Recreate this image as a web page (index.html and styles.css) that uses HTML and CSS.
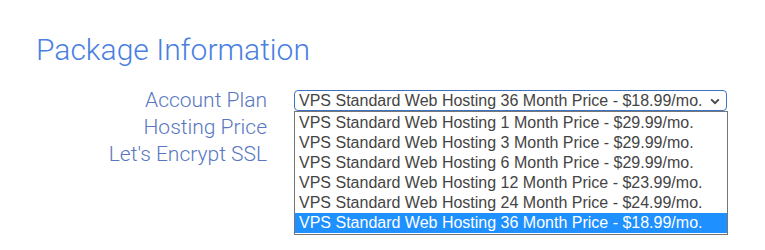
FILE: index.html
```html
<!DOCTYPE html>
<html lang="en">
<head>
  <meta charset="UTF-8">
  <meta name="viewport" content="width=device-width, initial-scale=1.0">
  <title>Package Information</title>
  <link rel="stylesheet" href="styles.css">
</head>
<body>
<div class="section">
  <h2 class="section-title">Package Information</h2>
  <div class="form">
    <div class="form-row">
      <div class="input-label">Account Plan</div>
      <div class="select-wrap">
        <div class="select">
          <span>VPS Standard Web Hosting 36 Month Price - $18.99/mo.</span>
          <svg class="chevron" width="10" height="7" viewBox="0 0 10 7">
            <path d="M1.2 1.4 L5 5.2 L8.8 1.4" fill="none" stroke="#444" stroke-width="1.8"/>
          </svg>
        </div>
        <div class="options">
          <div class="option">VPS Standard Web Hosting 1 Month Price - $29.99/mo.</div>
          <div class="option">VPS Standard Web Hosting 3 Month Price - $29.99/mo.</div>
          <div class="option">VPS Standard Web Hosting 6 Month Price - $29.99/mo.</div>
          <div class="option">VPS Standard Web Hosting 12 Month Price - $23.99/mo.</div>
          <div class="option">VPS Standard Web Hosting 24 Month Price - $24.99/mo.</div>
          <div class="option selected">VPS Standard Web Hosting 36 Month Price - $18.99/mo.</div>
        </div>
      </div>
    </div>
    <div class="form-row">
      <div class="input-label">Hosting Price</div>
    </div>
    <div class="form-row">
      <div class="input-label">Let's Encrypt SSL</div>
    </div>
  </div>
</div>
</body>
</html>
```

FILE: styles.css
```css
body {
  font-family: Roboto, "Open Sans", sans-serif;
  background-color: #fff;
  margin: 0;
  padding: 0;
  min-height: 250px;
}
.section {
  padding: 30px 0 0 36px;
}
.section-title {
  font-weight: 300;
  font-size: 30px;
  line-height: 40px;
  color: #4a80e0;
  margin: 0;
}
.form {
  margin-top: 17px;
}
.form-row {
  display: flex;
  align-items: flex-start;
  height: 27px;
}
.input-label {
  width: 231px;
  text-align: right;
  font-size: 21px;
  font-weight: 300;
  line-height: 27px;
  color: #5877c0;
}
.select-wrap {
  position: relative;
  margin-left: 27px;
  margin-top: 3px;
}
.select {
  box-sizing: border-box;
  width: 433px;
  height: 21px;
  border: 1px solid #3b72c6;
  border-radius: 4px;
  display: flex;
  align-items: center;
  justify-content: space-between;
  padding: 0 6px 0 4px;
  font-family: "Liberation Sans", Arial, sans-serif;
  font-size: 16px;
  color: #444;
}
.chevron {
  margin-top: 1px;
}
.options {
  position: absolute;
  top: 21px;
  left: 0;
  box-sizing: border-box;
  width: 434px;
  border: 1px solid #777;
  background-color: #fff;
  padding: 1px 0;
  z-index: 1;
}
.option {
  font-family: "Liberation Sans", Arial, sans-serif;
  font-size: 16px;
  line-height: 20px;
  padding: 0 4px;
  color: #444;
  white-space: nowrap;
}
.option.selected {
  background-color: #1e90ff;
  color: #fff;
}
```
